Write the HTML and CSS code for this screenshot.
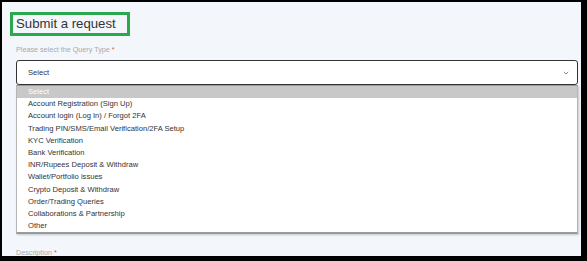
FILE: index.html
```html
<!DOCTYPE html>
<html>
<head>
    <title>Submit a request</title>
    <link rel="stylesheet" href="styles.css">
</head>
<body>
    <div class="frame">
        <div class="title-box">
            <h1>Submit a request</h1>
        </div>
        <div class="field">
            <label class="field-label">Please select the Query Type <span class="req">*</span></label>
            <div class="select">
                <span>Select</span>
                <svg class="chevron" width="6" height="4" viewBox="0 0 6 4">
                    <path d="M0.8 1 L3 3 L5.2 1" fill="none" stroke="#666" stroke-width="0.8"/>
                </svg>
            </div>
            <ul class="options">
                <li class="active">Select</li>
                <li>Account Registration (Sign Up)</li>
                <li>Account login (Log In) / Forgot 2FA</li>
                <li>Trading PIN/SMS/Email Verification/2FA Setup</li>
                <li>KYC Verification</li>
                <li>Bank Verification</li>
                <li>INR/Rupees Deposit &amp; Withdraw</li>
                <li>Wallet/Portfolio issues</li>
                <li>Crypto Deposit &amp; Withdraw</li>
                <li>Order/Trading Queries</li>
                <li>Collaborations &amp; Partnership</li>
                <li>Other</li>
            </ul>
        </div>
        <label class="field-label desc">Description <span class="req">*</span></label>
    </div>
</body>
</html>
```

FILE: styles.css
```css
body {
    margin: 0;
    background: #000;
    padding: 2px 6px 5px 2px;
    font-family: 'Liberation Sans', Arial, sans-serif;
}
.frame {
    background: #f3f6fb;
    height: 254px;
    box-sizing: border-box;
    padding: 10px 3px 0 14px;
    overflow: hidden;
}
.title-box {
    display: inline-block;
    margin-left: -6px;
    width: 120px;
    height: 24px;
    box-sizing: border-box;
    border: 3px solid #2ca84c;
    padding: 0 0 0 3px;
}
h1 {
    margin: 0;
    font-size: 13.2px;
    font-weight: normal;
    color: #333;
    line-height: 18px;
}
.field {
    margin-top: 9px;
}
.field-label {
    display: block;
    font-size: 7.2px;
    color: #a9a9a9;
    line-height: 10px;
}
.req {
    color: #e0524f;
}
.select {
    margin-top: 5px;
    height: 25px;
    box-sizing: border-box;
    border: 1px solid #333;
    border-radius: 3px;
    background: #fff;
    display: flex;
    align-items: center;
    justify-content: space-between;
    padding: 0 8px 0 11px;
    font-size: 7.6px;
    color: #333;
}
.options {
    list-style: none;
    margin: 0;
    padding: 0;
    background: #fff;
    border: 1px solid #b5b5b5;
    border-top: 1px solid #999;
    border-bottom: 2px solid #9a9a9a;
    box-shadow: 1px 1px 2px rgba(0, 0, 0, 0.2);
    font-size: 7.6px;
    color: #333;
}
.options li {
    height: 12.2px;
    line-height: 12.2px;
    padding-left: 11px;
}
.options li.active {
    background: #c8c8c8;
    color: #fff;
}
.desc {
    margin-top: 14px;
}
```
